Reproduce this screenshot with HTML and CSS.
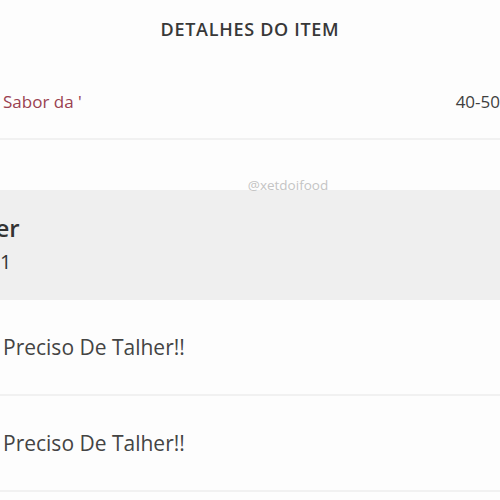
FILE: index.html
```html
<!DOCTYPE html>
<html lang="pt-BR">
<head>
  <meta charset="UTF-8">
  <meta name="viewport" content="width=device-width, initial-scale=1.0">
  <title>Detalhes do item</title>
  <link rel="stylesheet" href="styles.css">
</head>
<body>
  <div class="screen">
    <header class="top-bar">
      <h1 class="title">DETALHES DO ITEM</h1>
    </header>

    <div class="store-row">
      <span class="store-name">Sabor da '</span>
      <span class="store-time">40-50</span>
    </div>

    <div class="spacer">
      <span class="watermark">@xetdoifood</span>
    </div>

    <section class="item-band">
      <div class="item-name">Talher</div>
      <div class="item-qty">1</div>
    </section>

    <div class="option-row">Preciso De Talher!!</div>
    <div class="option-row">Preciso De Talher!!</div>
  </div>
</body>
</html>
```

FILE: styles.css
```css
body {
  margin: 0;
  font-family: "Open Sans", sans-serif;
  background: #fdfdfd;
  color: #3f3f3f;
  overflow: hidden;
}

.screen {
  width: 500px;
  overflow: hidden;
}

.top-bar {
  height: 58px;
  display: flex;
  align-items: center;
  justify-content: center;
}

.title {
  margin: 0;
  font-size: 18px;
  font-weight: 600;
  letter-spacing: 0.7px;
  color: #383838;
}

.store-row {
  height: 82px;
  padding: 6px 0 0 3px;
  display: flex;
  align-items: center;
  justify-content: space-between;
  border-bottom: 2px solid #f1f1f1;
  box-sizing: border-box;
  font-size: 17px;
  white-space: nowrap;
}

.store-name {
  color: #9a4150;
}

.store-time {
  color: #3f3f3f;
}

.spacer {
  height: 50px;
  display: flex;
  justify-content: center;
  align-items: flex-end;
}

.watermark {
  font-size: 13.5px;
  color: #c4c4c4;
  margin-left: 76px;
  margin-bottom: -4px;
}

.item-band {
  height: 110px;
  background: #efefef;
  padding-top: 22px;
  box-sizing: border-box;
}

.item-name {
  font-size: 24px;
  line-height: 32px;
  font-weight: 600;
  color: #333;
  margin-left: -54px;
}

.item-qty {
  margin-top: 4px;
  font-size: 20px;
  color: #333;
}

.option-row {
  height: 94px;
  display: flex;
  align-items: center;
  padding-left: 3px;
  font-size: 21px;
  color: #444;
  border-bottom: 2px solid #f1f1f1;
}
```
